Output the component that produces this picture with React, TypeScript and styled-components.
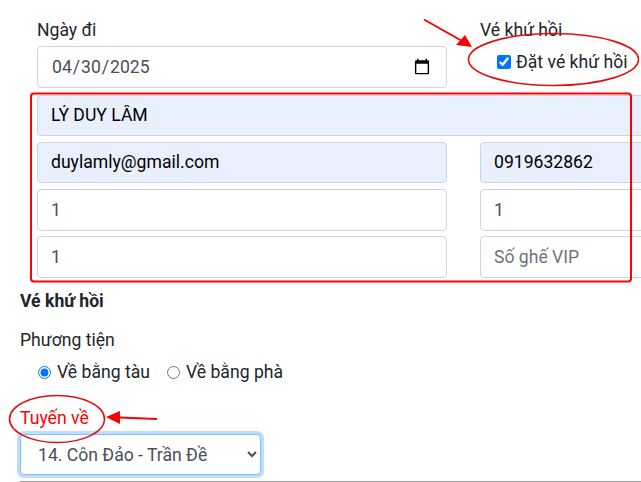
import React from "react";
import styled, { createGlobalStyle } from "styled-components";

const GlobalStyle = createGlobalStyle`
	html, body {
		margin: 0;
		padding: 0;
		background: #fff;
	}
	body {
		font-family: Roboto, "Liberation Sans", sans-serif;
		font-size: 17.6px;
		line-height: 26.4px;
		color: #212529;
	}
`;

const Page = styled.div`
	position: relative;
	width: 641px;
	height: 482px;
	overflow: hidden;
`;

const Inner = styled.div`
	padding: 17px 0 0 37px;
	width: 700px;
`;

const Row = styled.div<{ $gap?: number }>`
	display: grid;
	grid-template-columns: 410px 1fr;
	column-gap: 33px;
	margin-bottom: ${p => p.$gap ?? 5}px;
`;

const Full = styled.div`
	margin-bottom: 6px;
`;

const Label = styled.label`
	display: block;
	height: 29px;
	line-height: 26px;
`;

const Field = styled.input<{ $filled?: boolean }>`
	display: block;
	box-sizing: border-box;
	width: 100%;
	height: ${p => (p.$filled ? "41px" : "42px")};
	margin-bottom: ${p => (p.$filled ? "1px" : "0")};
	padding: ${p => (p.$filled ? "5px 13px 7px" : "6px 13px")};
	font: inherit;
	color: ${p => (p.$filled ? "#000" : "#495057")};
	background: ${p => (p.$filled ? "#e8f0fe" : "#fff")};
	border: 1px solid #ced4da;
	border-radius: 4px;
	outline: none;
	&::placeholder {
		color: #6c757d;
		opacity: 1;
	}
`;

const Check = styled.label`
	display: flex;
	align-items: center;
	gap: 5px;
	margin: 3px 0 0 17px;
	height: 26px;
	input {
		margin: 0;
		width: 14px;
		height: 14px;
	}
`;

const Section = styled.div`
	padding-left: 20px;
	margin-top: 10px;
`;

const Title = styled.div`
	font-weight: 700;
	height: 27px;
	line-height: 26px;
	margin-bottom: 12px;
`;

const RadioRow = styled.div`
	display: flex;
	gap: 17px;
	padding-left: 18px;
	height: 26px;
	margin: 6px 0 21px;
`;

const Radio = styled.label`
	display: flex;
	align-items: center;
	gap: 6px;
	input {
		margin: 0;
		width: 13px;
		height: 13px;
	}
`;

const RouteLabel = styled.div`
	color: #f00;
	height: 28px;
	line-height: 24px;
`;

const RouteSelect = styled.select`
	display: block;
	box-sizing: border-box;
	width: 241px;
	height: 41px;
	padding: 6px 0 6px 13px;
	font: inherit;
	color: #495057;
	background: #fff;
	border: 1px solid #80bdff;
	border-radius: 4px;
	box-shadow: 0 0 0 3px rgba(0, 123, 255, 0.25);
	outline: none;
`;

const Rule = styled.hr`
	position: absolute;
	left: 20px;
	top: 481px;
	width: 621px;
	margin: 0;
	border: 0;
	border-top: 1px solid #999;
`;

const Marks = styled.svg`
	position: absolute;
	left: 0;
	top: 0;
	pointer-events: none;
`;

export default function App() {
	return (
		<Page>
			<GlobalStyle />
			<Inner>
				<Row $gap={7}>
					<div>
						<Label>Ngày đi</Label>
						<Field type="date" defaultValue="2025-04-30" />
					</div>
					<div>
						<Label>Vé khứ hồi</Label>
						<Check>
							<input type="checkbox" defaultChecked />
							Đặt vé khứ hồi
						</Check>
					</div>
				</Row>
				<Full>
					<Field $filled defaultValue="LÝ DUY LÂM" />
				</Full>
				<Row>
					<Field $filled defaultValue="duylamly@gmail.com" />
					<Field $filled defaultValue="0919632862" />
				</Row>
				<Row>
					<Field defaultValue="1" />
					<Field defaultValue="1" />
				</Row>
				<Row>
					<Field defaultValue="1" />
					<Field placeholder="Số ghế VIP" />
				</Row>
			</Inner>
			<Section>
				<Title>Vé khứ hồi</Title>
				<div>Phương tiện</div>
				<RadioRow>
					<Radio>
						<input type="radio" name="ve" defaultChecked />
						Về bằng tàu
					</Radio>
					<Radio>
						<input type="radio" name="ve" />
						Về bằng phà
					</Radio>
				</RadioRow>
				<RouteLabel>Tuyến về</RouteLabel>
				<RouteSelect defaultValue="14">
					<option value="14">14. Côn Đảo - Trần Đề</option>
				</RouteSelect>
			</Section>
			<Rule />
			<Marks width="641" height="482" viewBox="0 0 641 482" fill="none">
				<rect x="31" y="93.5" width="600" height="188" rx="3" stroke="#f00" strokeWidth="2" />
				<ellipse cx="553.5" cy="59.5" rx="85" ry="26" stroke="#e01010" strokeWidth="1.6" />
				<ellipse cx="57" cy="419" rx="47.5" ry="23.5" stroke="#e01010" strokeWidth="1.6" />
				<path d="M424 19.5 L462 41" stroke="#f00" strokeWidth="2" />
				<path d="M472 47 L456 45 L465 35 Z" fill="#f00" />
				<path d="M120 417.5 L157 419" stroke="#f00" strokeWidth="2" />
				<path d="M106 417 L120 411 L120 424 Z" fill="#f00" />
			</Marks>
		</Page>
	);
}
